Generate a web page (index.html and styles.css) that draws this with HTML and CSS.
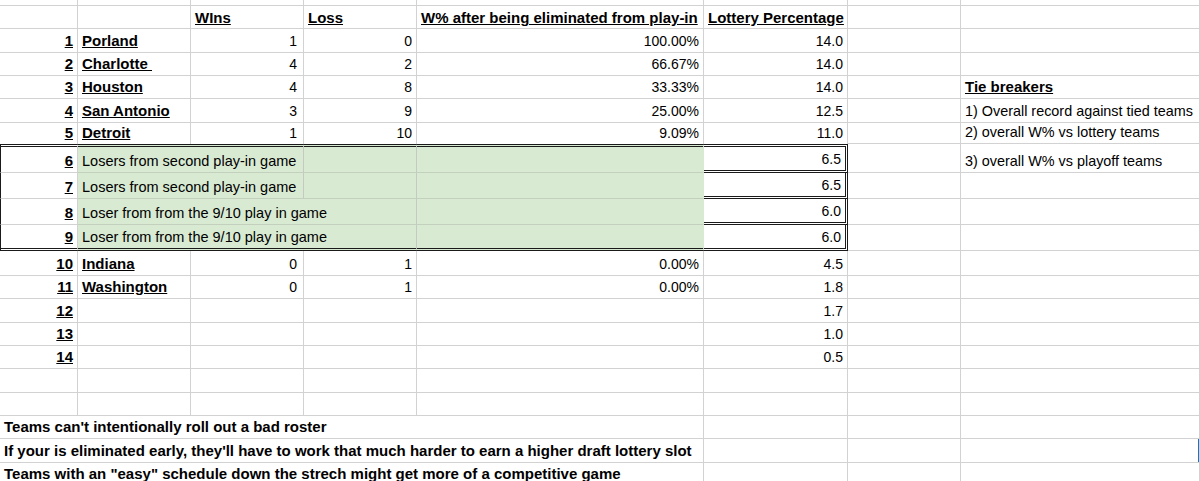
FILE: index.html
```html
<!DOCTYPE html>
<html>
<head>
<meta charset="utf-8">
<title>Lottery</title>
<link rel="stylesheet" href="styles.css">
</head>
<body>
<div class="sheet">
  <!-- row 0 (partial) -->
  <div class="c"></div><div class="c"></div><div class="c"></div><div class="c"></div><div class="c"></div><div class="c"></div><div class="c"></div><div class="c"></div>

  <!-- header -->
  <div class="c"></div>
  <div class="c"></div>
  <div class="c hd b u">WIns</div>
  <div class="c hd b u">Loss</div>
  <div class="c hd b u">W% after being eliminated from play-in</div>
  <div class="c hd b u">Lottery Percentage</div>
  <div class="c"></div>
  <div class="c"></div>

  <!-- 1 -->
  <div class="c r b u">1</div>
  <div class="c b u">Porland</div>
  <div class="c r n pr6">1</div>
  <div class="c r n">0</div>
  <div class="c r n">100.00%</div>
  <div class="c r n">14.0</div>
  <div class="c"></div>
  <div class="c"></div>

  <!-- 2 -->
  <div class="c r b u">2</div>
  <div class="c b u">Charlotte&nbsp;</div>
  <div class="c r n pr6">4</div>
  <div class="c r n">2</div>
  <div class="c r n">66.67%</div>
  <div class="c r n">14.0</div>
  <div class="c"></div>
  <div class="c"></div>

  <!-- 3 -->
  <div class="c r b u">3</div>
  <div class="c b u">Houston</div>
  <div class="c r n pr6">4</div>
  <div class="c r n">8</div>
  <div class="c r n">33.33%</div>
  <div class="c r n">14.0</div>
  <div class="c"></div>
  <div class="c b u">Tie breakers</div>

  <!-- 4 -->
  <div class="c r b u">4</div>
  <div class="c b u">San Antonio</div>
  <div class="c r n pr6">3</div>
  <div class="c r n">9</div>
  <div class="c r n">25.00%</div>
  <div class="c r n">12.5</div>
  <div class="c"></div>
  <div class="c t">1) Overall record against tied teams</div>

  <!-- 5 -->
  <div class="c r b u nb">5</div>
  <div class="c b u nb">Detroit</div>
  <div class="c r n pr6 nb">1</div>
  <div class="c r n nb">10</div>
  <div class="c r n nb">9.09%</div>
  <div class="c r n nb">11.0</div>
  <div class="c"></div>
  <div class="c t">2) overall W% vs lottery teams</div>

  <!-- 6 -->
  <div class="c r b u dt dl">6</div>
  <div class="c g s2 dt">Losers from second play-in game</div>
  <div class="c g dt"></div>
  <div class="c g ge dt"></div>
  <div class="c r n dt db dr">6.5</div>
  <div class="c"></div>
  <div class="c t">3) overall W% vs playoff teams</div>

  <!-- 7 -->
  <div class="c r b u dl">7</div>
  <div class="c g s2">Losers from second play-in game</div>
  <div class="c g"></div>
  <div class="c g ge"></div>
  <div class="c r n db dr">6.5</div>
  <div class="c"></div>
  <div class="c"></div>

  <!-- 8 -->
  <div class="c r b u dl">8</div>
  <div class="c g s3">Loser from from the 9/10 play in game</div>
  <div class="c g ge"></div>
  <div class="c r n db dr">6.0</div>
  <div class="c"></div>
  <div class="c"></div>

  <!-- 9 -->
  <div class="c r b u dl db">9</div>
  <div class="c g s3 db">Loser from from the 9/10 play in game</div>
  <div class="c g ge db"></div>
  <div class="c r n db dr">6.0</div>
  <div class="c"></div>
  <div class="c"></div>

  <!-- 10 -->
  <div class="c r b u">10</div>
  <div class="c b u">Indiana</div>
  <div class="c r n pr6">0</div>
  <div class="c r n">1</div>
  <div class="c r n">0.00%</div>
  <div class="c r n">4.5</div>
  <div class="c"></div>
  <div class="c"></div>

  <!-- 11 -->
  <div class="c r b u">11</div>
  <div class="c b u">Washington</div>
  <div class="c r n pr6">0</div>
  <div class="c r n">1</div>
  <div class="c r n">0.00%</div>
  <div class="c r n">1.8</div>
  <div class="c"></div>
  <div class="c"></div>

  <!-- 12 -->
  <div class="c r b u">12</div>
  <div class="c"></div><div class="c"></div><div class="c"></div><div class="c"></div>
  <div class="c r n">1.7</div>
  <div class="c"></div><div class="c"></div>

  <!-- 13 -->
  <div class="c r b u">13</div>
  <div class="c"></div><div class="c"></div><div class="c"></div><div class="c"></div>
  <div class="c r n">1.0</div>
  <div class="c"></div><div class="c"></div>

  <!-- 14 -->
  <div class="c r b u">14</div>
  <div class="c"></div><div class="c"></div><div class="c"></div><div class="c"></div>
  <div class="c r n">0.5</div>
  <div class="c"></div><div class="c"></div>

  <!-- empty rows -->
  <div class="c"></div><div class="c"></div><div class="c"></div><div class="c"></div><div class="c"></div><div class="c"></div><div class="c"></div><div class="c"></div>
  <div class="c"></div><div class="c"></div><div class="c"></div><div class="c"></div><div class="c"></div><div class="c"></div><div class="c"></div><div class="c"></div>

  <!-- notes -->
  <div class="c s5 b">Teams can't intentionally roll out a bad roster</div>
  <div class="c"></div><div class="c"></div><div class="c"></div>

  <div class="c s5 b">If your is eliminated early, they'll have to work that much harder to earn a higher draft lottery slot</div>
  <div class="c"></div><div class="c"></div><div class="c sel"></div>

  <div class="c s5 b">Teams with an "easy" schedule down the strech might get more of a competitive game</div>
  <div class="c"></div><div class="c"></div><div class="c"></div>
</div>
</body>
</html>
```

FILE: styles.css
```css
* {
  box-sizing: border-box;
}

html,
body {
  margin: 0;
  padding: 0;
  height: 481px;
  background: #ffffff;
  overflow: hidden;
}

body {
  font-family: "Liberation Sans", Arial, sans-serif;
  color: #000000;
}

.sheet {
  display: grid;
  grid-template-columns: 78px 113px 113px 113px 287px 144px 113px 239px;
  grid-template-rows: 6px 23px 24px 23px 23px 24px 21px 29px 26px 26px 26px 25px 23px 24px 23px 23px 24px 23px 23px 24px 23px;
  width: 1200px;
}

.c {
  display: flex;
  align-items: flex-end;
  min-width: 0;
  padding: 0 4px 3px 4px;
  border-right: 1px solid #d2d2d2;
  border-bottom: 1px solid #d2d2d2;
  white-space: nowrap;
  font-size: 14.5px;
  line-height: 16px;
}

.r {
  justify-content: flex-end;
}

.pr6 {
  padding-right: 6px;
}

.b {
  font-weight: bold;
  font-size: 15px;
}

.u {
  text-decoration: underline;
}

.n {
  font-size: 14px;
}

.t {
  font-size: 14.4px;
}

.hd {
  padding-bottom: 2px;
}

.s2 {
  grid-column: span 2;
}

.s3 {
  grid-column: span 3;
}

.s5 {
  grid-column: span 5;
}

.g {
  background: #d9ead3;
  border-bottom-color: #c3d0be;
  border-right-color: #c4c9c2;
}

.ge {
  border-right-color: #d9ead3;
}

.nb {
  border-bottom: none;
}

.dt {
  border-top: 3px double #1a1a1a;
}

.db {
  border-bottom: 3px double #1a1a1a;
}

.dl {
  border-left: 1px solid #1a1a1a;
}

.dr {
  border-right: 3px double #1a1a1a;
}

.sel {
  box-shadow: inset -1px 0 0 #1f6fd1;
}
```
